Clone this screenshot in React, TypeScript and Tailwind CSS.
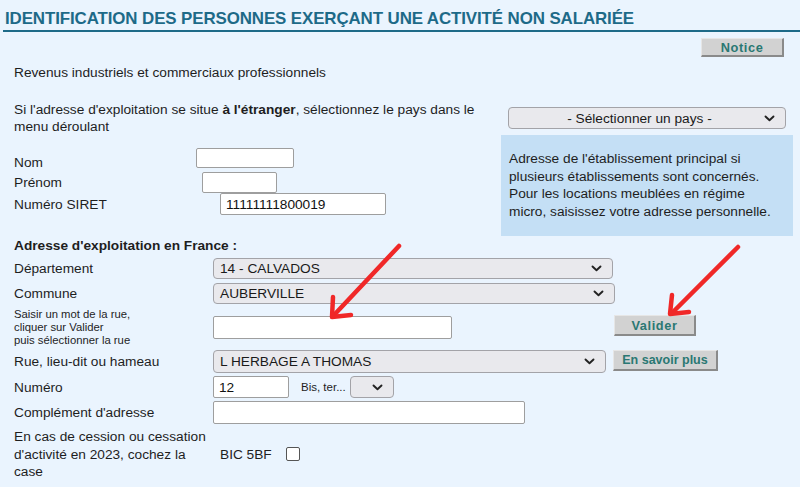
import React from "react";

const Chevron = () => (
  <svg width="11" height="7" viewBox="0 0 11 7" className="shrink-0">
    <path d="M1.5 1.5 L5.5 5.2 L9.5 1.5" fill="none" stroke="#222" strokeWidth="1.9" strokeLinecap="round" strokeLinejoin="round" />
  </svg>
);

function Select({ w, h = 21, text, center = false }: { w: number; h?: number; text: string; center?: boolean }) {
  return (
    <div
      className="flex items-center shrink-0 rounded-[4px] border border-[#a3a3a8] bg-[#e9e9ed] pl-[6px] pr-[10px] text-[13.7px] text-[#1a1a1a]"
      style={{ width: w, height: h }}
    >
      <span className={center ? "flex-1 text-center whitespace-nowrap" : "flex-1 whitespace-nowrap"}>{text}</span>
      <Chevron />
    </div>
  );
}

function Input({ w, h = 21, value = "" }: { w: number; h?: number; value?: string }) {
  return (
    <div
      className="flex items-center shrink-0 rounded-[2px] border border-[#9e9e9e] bg-white px-[5px] text-[13.7px] text-[#111]"
      style={{ width: w, height: h }}
    >
      {value}
    </div>
  );
}

function Btn({ w, h, tight = false, children }: { w: number; h: number; tight?: boolean; children: React.ReactNode }) {
  return (
    <div
      className={
        "flex items-center justify-center shrink-0 bg-[#d2d2d2] border-t border-l border-[#e6e6e6] border-r-2 border-b-2 border-r-[#8a8a8a] border-b-[#8a8a8a] font-bold text-[#2a7873] whitespace-nowrap " +
        (tight ? "text-[12.5px] tracking-[0px]" : "text-[12.8px] tracking-[0.6px]")
      }
      style={{ width: w, height: h }}
    >
      {children}
    </div>
  );
}

export default function App() {
  return (
    <div className="relative w-[800px] h-[487px] overflow-hidden bg-[#eaf4fe] text-[#1e1e1e] text-[13.7px] leading-[17px]" style={{ fontFamily: '"Liberation Sans", Arial, sans-serif' }}>
      {/* Title */}
      <div className="ml-[3px] h-[32px] border-b-2 border-[#1d6a88] pl-[2px] pt-[9px]">
        <div className="text-[16.9px] font-bold leading-[19px] tracking-[-0.1px] text-[#1d6a88] whitespace-nowrap">
          IDENTIFICATION DES PERSONNES EXERÇANT UNE ACTIVITÉ NON SALARIÉE
        </div>
      </div>

      {/* Notice */}
      <div className="flex justify-end pr-[16px] mt-[6px]">
        <Btn w={83} h={19}>Notice</Btn>
      </div>

      <div className="pl-[14px] mt-[7px]">Revenus industriels et commerciaux professionnels</div>

      {/* Pays */}
      <div className="flex mt-[20px] pl-[14px]">
        <div className="w-[480px] whitespace-nowrap">
          <span>Si l'adresse d'exploitation se situe </span>
          <b>à l'étranger</b>
          <span>, sélectionnez le pays dans le</span>
          <br />
          <span>menu déroulant</span>
        </div>
        <div className="ml-[14px] mt-[6px]">
          <Select w={278} h={22} text="- Sélectionner un pays -" center />
        </div>
      </div>

      {/* Identity + info */}
      <div className="flex mt-[0px]">
        <div className="w-[501px] pl-[14px] pt-[13px]">
          <div className="flex items-start h-[23px]">
            <span className="w-[182px] pt-[6px] leading-[17px]">Nom</span>
            <Input w={98} h={20} />
          </div>
          <div className="flex items-center h-[22px]">
            <span className="w-[188px]">Prénom</span>
            <Input w={75} h={21} />
          </div>
          <div className="flex items-center h-[22px]">
            <span className="w-[206px]">Numéro SIRET</span>
            <Input w={166} h={22} value="11111111800019" />
          </div>
        </div>
        <div className="w-[292px] h-[101px] bg-[#c4dff5] pl-[8px] pt-[15px] leading-[17.6px] whitespace-nowrap text-[#1e1e1e]">
          Adresse de l'établissement principal si<br />
          plusieurs établissements sont concernés.<br />
          Pour les locations meublées en régime<br />
          micro, saisissez votre adresse personnelle.
        </div>
      </div>

      {/* Adresse en France */}
      <div className="pl-[14px] mt-[1px] font-bold">Adresse d'exploitation en France :</div>

      <div className="pl-[14px] mt-[3px] flex flex-col">
        <div className="flex items-center h-[22px]">
          <span className="w-[199px]">Département</span>
          <Select w={400} text="14 - CALVADOS" />
        </div>
        <div className="flex items-center h-[22px] mt-[3px]">
          <span className="w-[199px]">Commune</span>
          <Select w={402} text="AUBERVILLE" />
        </div>
        <div className="flex items-center h-[40px] mt-[3px]">
          <span className="w-[199px] text-[11.3px] leading-[13px] whitespace-nowrap">
            Saisir un mot de la rue,<br />cliquer sur Valider<br />puis sélectionner la rue
          </span>
          <Input w={239} h={23} />
          <div className="ml-[162px] mt-[-3px]">
            <Btn w={82} h={21}>Valider</Btn>
          </div>
        </div>
        <div className="flex items-center h-[23px] mt-[3px]">
          <span className="w-[199px]">Rue, lieu-dit ou hameau</span>
          <Select w={393} h={23} text="L HERBAGE A THOMAS" />
          <div className="ml-[7px] mt-[-2px]">
            <Btn w={105} h={21} tight>En savoir plus</Btn>
          </div>
        </div>
        <div className="flex items-center h-[22px] mt-[3px]">
          <span className="w-[199px]">Numéro</span>
          <Input w={76} h={22} value="12" />
          <span className="ml-[12px] text-[11.5px]">Bis, ter...</span>
          <div className="ml-[4px]">
            <div className="flex items-center justify-end w-[44px] h-[22px] rounded-[4px] border border-[#a3a3a8] bg-[#e9e9ed] pr-[10px]">
              <Chevron />
            </div>
          </div>
        </div>
        <div className="flex items-center h-[23px] mt-[3px]">
          <span className="w-[199px]">Complément d'adresse</span>
          <Input w={312} h={23} />
        </div>
        <div className="flex items-center mt-[4px]">
          <span className="w-[206px] leading-[17.5px] whitespace-nowrap">
            En cas de cession ou cessation<br />d'activité en 2023, cochez la<br />case
          </span>
          <span>BIC 5BF</span>
          <span className="ml-[14px] w-[14px] h-[14px] rounded-[2px] border border-[#555] bg-white"></span>
        </div>
      </div>

      {/* Red arrows annotation */}
      <svg className="absolute left-0 top-0 pointer-events-none" width="800" height="487">
        <g stroke="#f02828" strokeWidth="4.5" strokeLinecap="round" strokeLinejoin="round" fill="none">
          <line x1="399" y1="246" x2="335" y2="314" />
          <polyline points="333,297 332,317 351,315" />
          <line x1="738" y1="247" x2="673" y2="312" />
          <polyline points="672,295 670,314 689,312" />
        </g>
      </svg>
    </div>
  );
}
